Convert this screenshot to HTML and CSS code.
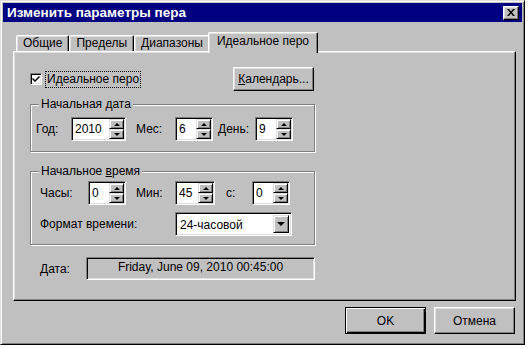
FILE: index.html
```html
<!DOCTYPE html>
<html>
<head>
  <meta charset="UTF-8">
  <title>Изменить параметры пера</title>
  <link rel="stylesheet" href="styles.css">
</head>
<body>
  <div class="window">
    <div class="titlebar">
      <span class="title">Изменить параметры пера</span>
      <span class="close">
        <svg width="8" height="7" viewBox="0 0 8 7">
          <path d="M0 0h2l2 2.5L6 0h2L5 3.5L8 7H6L4 4.5L2 7H0l3-3.5z" fill="#000"/>
        </svg>
      </span>
    </div>

    <div class="tabs">
      <div class="tab">Общие</div>
      <div class="tab">Пределы</div>
      <div class="tab">Диапазоны</div>
      <div class="tab active">Идеальное перо</div>
    </div>

    <div class="panel">
      <div class="top-row">
        <label class="check">
          <span class="check-box">
            <svg width="8" height="7" viewBox="0 0 8 7">
              <path d="M0 3l1-1 2 2 4-4 1 1-5 5z" fill="#000"/>
            </svg>
          </span>
          <span class="focus">Идеальное перо</span>
        </label>
        <button class="btn cal"><u>К</u>алендарь...</button>
      </div>

      <div class="group group-date">
        <span class="legend">Начальная <u>д</u>ата</span>
        <div class="row row-first">
          <span class="lbl w-year">Год:</span>
          <span class="spin w-55"><span class="spin-val">2010</span><span class="spin-btns"><span class="spin-btn up"></span><span class="spin-btn down"></span></span></span>
          <span class="lbl w-month">Мес:</span>
          <span class="spin w-38"><span class="spin-val">6</span><span class="spin-btns"><span class="spin-btn up"></span><span class="spin-btn down"></span></span></span>
          <span class="lbl w-day">День:</span>
          <span class="spin w-38"><span class="spin-val">9</span><span class="spin-btns"><span class="spin-btn up"></span><span class="spin-btn down"></span></span></span>
        </div>
      </div>

      <div class="group group-time">
        <span class="legend">Начальное <u>в</u>ремя</span>
        <div class="row row-time">
          <span class="lbl w-hour">Часы:</span>
          <span class="spin w-38"><span class="spin-val">0</span><span class="spin-btns"><span class="spin-btn up"></span><span class="spin-btn down"></span></span></span>
          <span class="lbl w-month">Мин:</span>
          <span class="spin w-40"><span class="spin-val">45</span><span class="spin-btns"><span class="spin-btn up"></span><span class="spin-btn down"></span></span></span>
          <span class="lbl w-sec">с:</span>
          <span class="spin w-38"><span class="spin-val">0</span><span class="spin-btns"><span class="spin-btn up"></span><span class="spin-btn down"></span></span></span>
        </div>
        <div class="row row-format">
          <span class="lbl w-format">Формат времени:</span>
          <span class="combo">
            <span class="combo-val">24-часовой</span>
            <span class="combo-btn"></span>
          </span>
        </div>
      </div>

      <div class="date-row">
        <span class="lbl w-date">Дата:</span>
        <div class="date-box">Friday, June 09, 2010 00:45:00</div>
      </div>
    </div>

    <div class="buttons">
      <button class="btn dlg default">OK</button>
      <button class="btn dlg">Отмена</button>
    </div>
  </div>
</body>
</html>
```

FILE: styles.css
```css
/* Base */
* {
  box-sizing: border-box;
}

body {
  margin: 0;
  background: #fff;
  font-family: "Liberation Sans", Arial, sans-serif;
  font-size: 12px;
  color: #000;
}

u {
  text-decoration: underline;
}

/* Window frame */
.window {
  width: 525px;
  height: 345px;
  background: #c0c0c0;
  border: 1px solid;
  border-color: #dfdfdf #000 #000 #dfdfdf;
  box-shadow: inset 1px 1px #fff, inset -1px -1px #808080;
  padding: 2px 2px 0 2px;
}

.titlebar {
  height: 19px;
  background: #000080;
  color: #fff;
  display: flex;
  align-items: center;
  justify-content: space-between;
  padding: 0 3px 0 4px;
}

.title {
  font-weight: bold;
  font-size: 13.5px;
}

.close {
  width: 16px;
  height: 14px;
  background: #c0c0c0;
  border: 1px solid;
  border-color: #fff #000 #000 #fff;
  box-shadow: inset -1px -1px #808080, inset 1px 1px #dfdfdf;
  display: flex;
  align-items: center;
  justify-content: center;
}

/* Tabs */
.tabs {
  display: flex;
  align-items: flex-end;
  height: 19px;
  margin: 10px 0 0 10px;
  padding-left: 3px;
  position: relative;
  z-index: 1;
}

.tab {
  height: 16px;
  line-height: 15px;
  padding: 0 6px;
  border: 1px solid;
  border-bottom: 0;
  border-color: #fff #000 #000 #fff;
  box-shadow: inset -1px 0 #808080, inset 1px 1px #dfdfdf;
  border-radius: 2px 2px 0 0;
  background: #c0c0c0;
}

.tab.active {
  height: 21px;
  line-height: 17px;
  margin: 0 -2px -2px -2px;
  padding: 0 8px;
}

/* Panel */
.panel {
  width: 503px;
  height: 250px;
  margin-left: 10px;
  border: 1px solid;
  border-color: #fff #000 #000 #fff;
  box-shadow: inset -1px -1px #808080, inset 1px 1px #dfdfdf;
  padding: 15px 0 0 16px;
}

.top-row {
  display: flex;
  align-items: center;
  justify-content: space-between;
  width: 285px;
  height: 24px;
}

.check {
  display: flex;
  align-items: center;
  gap: 4px;
}

.check-box {
  width: 12px;
  height: 12px;
  background: #fff;
  border: 1px solid;
  border-color: #808080 #fff #fff #808080;
  box-shadow: inset 1px 1px #000, inset -1px -1px #dfdfdf;
  display: flex;
  align-items: center;
  justify-content: center;
}

.focus {
  outline: 1px dotted #000;
  padding: 0 1px;
  line-height: 15px;
}

/* Buttons */
.btn {
  font: inherit;
  color: #000;
  background: #c0c0c0;
  border: 1px solid;
  border-color: #fff #000 #000 #fff;
  box-shadow: inset -1px -1px #808080, inset 1px 1px #dfdfdf;
  padding: 0;
}

.cal {
  width: 81px;
  height: 24px;
  margin-right: 1px;
}

/* Group boxes */
.group {
  width: 285px;
  border: 1px solid #808080;
  box-shadow: inset 1px 1px #fff, 1px 1px #fff;
  padding: 0 0 10px 5px;
}

.group-date {
  margin-top: 13px;
}

.group-time {
  margin-top: 19px;
  padding: 0 0 8px 9px;
}

.legend {
  display: block;
  width: fit-content;
  margin: -8px 0 0 3px;
  padding: 0 2px;
  line-height: 14px;
  background: #c0c0c0;
}

.group-time .legend {
  margin-left: -1px;
}

.row {
  display: flex;
  align-items: center;
}

.row-first {
  margin-top: 6px;
}

.row-time {
  margin-top: 3px;
}

.row-format {
  margin-top: 7px;
}

.lbl {
  flex: none;
}

.w-year { width: 35px; }
.w-month { width: 39px; margin-left: 10px; }
.w-day { width: 37px; margin-left: 5px; }
.w-hour { width: 48px; }
.w-sec { width: 26px; margin-left: 11px; }
.w-format { width: 135px; }
.w-date { width: 46px; }

/* Spin boxes */
.spin {
  display: flex;
  height: 24px;
  background: #fff;
  border: 1px solid;
  border-color: #808080 #fff #fff #808080;
  box-shadow: inset 1px 1px #000, inset -1px -1px #dfdfdf;
  padding: 1px;
}

.w-55 { width: 55px; }
.w-38 { width: 38px; }
.w-40 { width: 40px; }

.spin-val {
  flex: 1;
  padding-left: 2px;
  line-height: 20px;
}

.spin-btns {
  display: flex;
  flex-direction: column;
  width: 15px;
}

.spin-btn {
  flex: 1;
  background: #c0c0c0;
  border: 1px solid;
  border-color: #dfdfdf #000 #000 #dfdfdf;
  box-shadow: inset 1px 1px #fff, inset -1px -1px #808080;
  display: flex;
  align-items: center;
  justify-content: center;
}

.spin-btn::after {
  content: "";
  border-left: 3px solid transparent;
  border-right: 3px solid transparent;
}

.spin-btn.up::after {
  border-bottom: 3px solid #000;
}

.spin-btn.down::after {
  border-top: 3px solid #000;
}

/* Combo box */
.combo {
  display: flex;
  width: 117px;
  height: 24px;
  background: #fff;
  border: 1px solid;
  border-color: #808080 #fff #fff #808080;
  box-shadow: inset 1px 1px #000, inset -1px -1px #dfdfdf;
  padding: 2px;
}

.combo-val {
  flex: 1;
  padding-left: 2px;
  line-height: 20px;
}

.combo-btn {
  width: 16px;
  background: #c0c0c0;
  border: 1px solid;
  border-color: #dfdfdf #000 #000 #dfdfdf;
  box-shadow: inset 1px 1px #fff, inset -1px -1px #808080;
  display: flex;
  align-items: center;
  justify-content: center;
}

.combo-btn::after {
  content: "";
  border-left: 4px solid transparent;
  border-right: 4px solid transparent;
  border-top: 4px solid #000;
}

/* Date readout */
.date-row {
  display: flex;
  align-items: center;
  margin-top: 12px;
  padding-left: 10px;
}

.date-box {
  width: 229px;
  height: 23px;
  line-height: 19px;
  text-align: center;
  border: 1px solid;
  border-color: #808080 #fff #fff #808080;
  box-shadow: inset 1px 1px #000, inset -1px -1px #dfdfdf;
}

/* Dialog buttons */
.buttons {
  display: flex;
  justify-content: flex-end;
  gap: 8px;
  margin-top: 6px;
  padding-right: 7px;
}

.dlg {
  width: 81px;
  height: 27px;
}

.dlg.default {
  border: 1px solid #000;
  box-shadow: inset 1px 1px #fff, inset -1px -1px #000, inset -2px -2px #808080;
}
```
